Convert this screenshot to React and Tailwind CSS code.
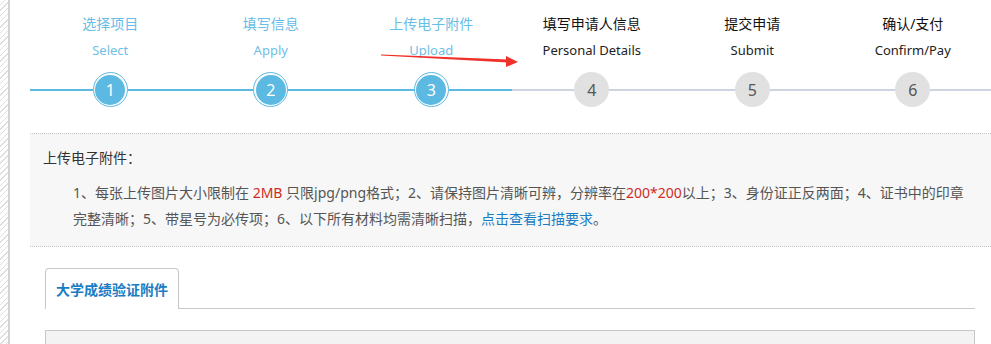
import React from 'react'

const steps = [
  { cn: '选择项目', en: 'Select', done: true },
  { cn: '填写信息', en: 'Apply', done: true },
  { cn: '上传电子附件', en: 'Upload', done: true },
  { cn: '填写申请人信息', en: 'Personal Details', done: false },
  { cn: '提交申请', en: 'Submit', done: false },
  { cn: '确认/支付', en: 'Confirm/Pay', done: false },
]

function Step({ step, index }) {
  const lineColor = step.done ? 'bg-[#5cb9e2]' : 'bg-[#cdd4df]'
  return (
    <div className="flex flex-col items-center pt-[14px]">
      <div className={`h-[20px] leading-[20px] text-[14px] ${step.done ? 'text-[#66bde5]' : 'text-[#111]'}`}>{step.cn}</div>
      <div className={`mt-[6px] h-[20px] leading-[20px] text-[13px] ${step.done ? 'text-[#6fc0e6]' : 'text-[#222]'}`}>{step.en}</div>
      <div className="mt-[12px] flex items-center w-full">
        <div className={`flex-1 h-[2px] ${lineColor}`} />
        {step.done ? (
          <div className="w-[35px] h-[35px] rounded-full border border-[#5cb9e2] bg-white flex items-center justify-center">
            <div className="w-[30px] h-[30px] rounded-full bg-[#5cb9e2] text-white text-[16px] flex items-center justify-center">{index + 1}</div>
          </div>
        ) : (
          <div className="w-[35px] h-[35px] rounded-full bg-[#e1e1e1] text-[#555] text-[16px] flex items-center justify-center">{index + 1}</div>
        )}
        <div className={`flex-1 h-[2px] ${lineColor}`} />
      </div>
    </div>
  )
}

export default function App() {
  return (
    <div className="relative flex h-[344px] w-[991px] overflow-hidden bg-white font-['Noto_Sans','Noto_Sans_CJK_SC',sans-serif]">
      <div className="w-[10px] shrink-0 border-r-2 border-[#d2d2d2] bg-[image:repeating-linear-gradient(135deg,#ffffff_0px,#ffffff_3px,#dedede_3px,#dedede_4px)]" />
      <div className="flex-1 min-w-0">
        <div className="pl-[20px] grid grid-cols-6 w-[983px]">
          {steps.map((s, i) => <Step key={i} step={s} index={i} />)}
        </div>

        <div className="ml-[20px] mt-[26px] border-y border-dotted border-[#c8c8c8] bg-[#f7f7f7] pt-[14px] pb-[14px]">
          <div className="pl-[13px] h-[20px] leading-[20px] text-[14px] text-[#333]">上传电子附件：</div>
          <div className="mt-[12px] pl-[43px] text-[14px] leading-[26px] text-[#555] whitespace-nowrap">
            1、每张上传图片大小限制在 <span className="text-[#d12b1f]">2MB</span> 只限jpg/png格式；2、请保持图片清晰可辨，分辨率在<span className="text-[#d12b1f]">200*200</span>以上；3、身份证正反两面；4、证书中的印章
            <br />
            完整清晰；5、带星号为必传项；6、以下所有材料均需清晰扫描，<span className="text-[#1a7dc4]">点击查看扫描要求</span>。
          </div>
        </div>

        <div className="ml-[35px] mt-[21px] w-[930px]">
          <div className="flex items-end">
            <div className="w-[134px] h-[41px] rounded-t-[4px] border border-b-0 border-[#c8c8c8] bg-white flex items-center justify-center text-[14px] font-bold text-[#1a7dc4]">大学成绩验证附件</div>
            <div className="flex-1 border-b border-[#c8c8c8]" />
          </div>
          <div className="mt-[21px] h-[40px] border border-[#c8c8c8] bg-[#f3f3f3]" />
        </div>
      </div>

      <svg className="absolute left-0 top-0 pointer-events-none" width="991" height="344">
        <polygon points="381,54.5 508,59.6 508,62.4 381,55.5" fill="#f0302a" />
        <polygon points="506,56 518,62 506,67" fill="#f0302a" />
      </svg>
    </div>
  )
}
